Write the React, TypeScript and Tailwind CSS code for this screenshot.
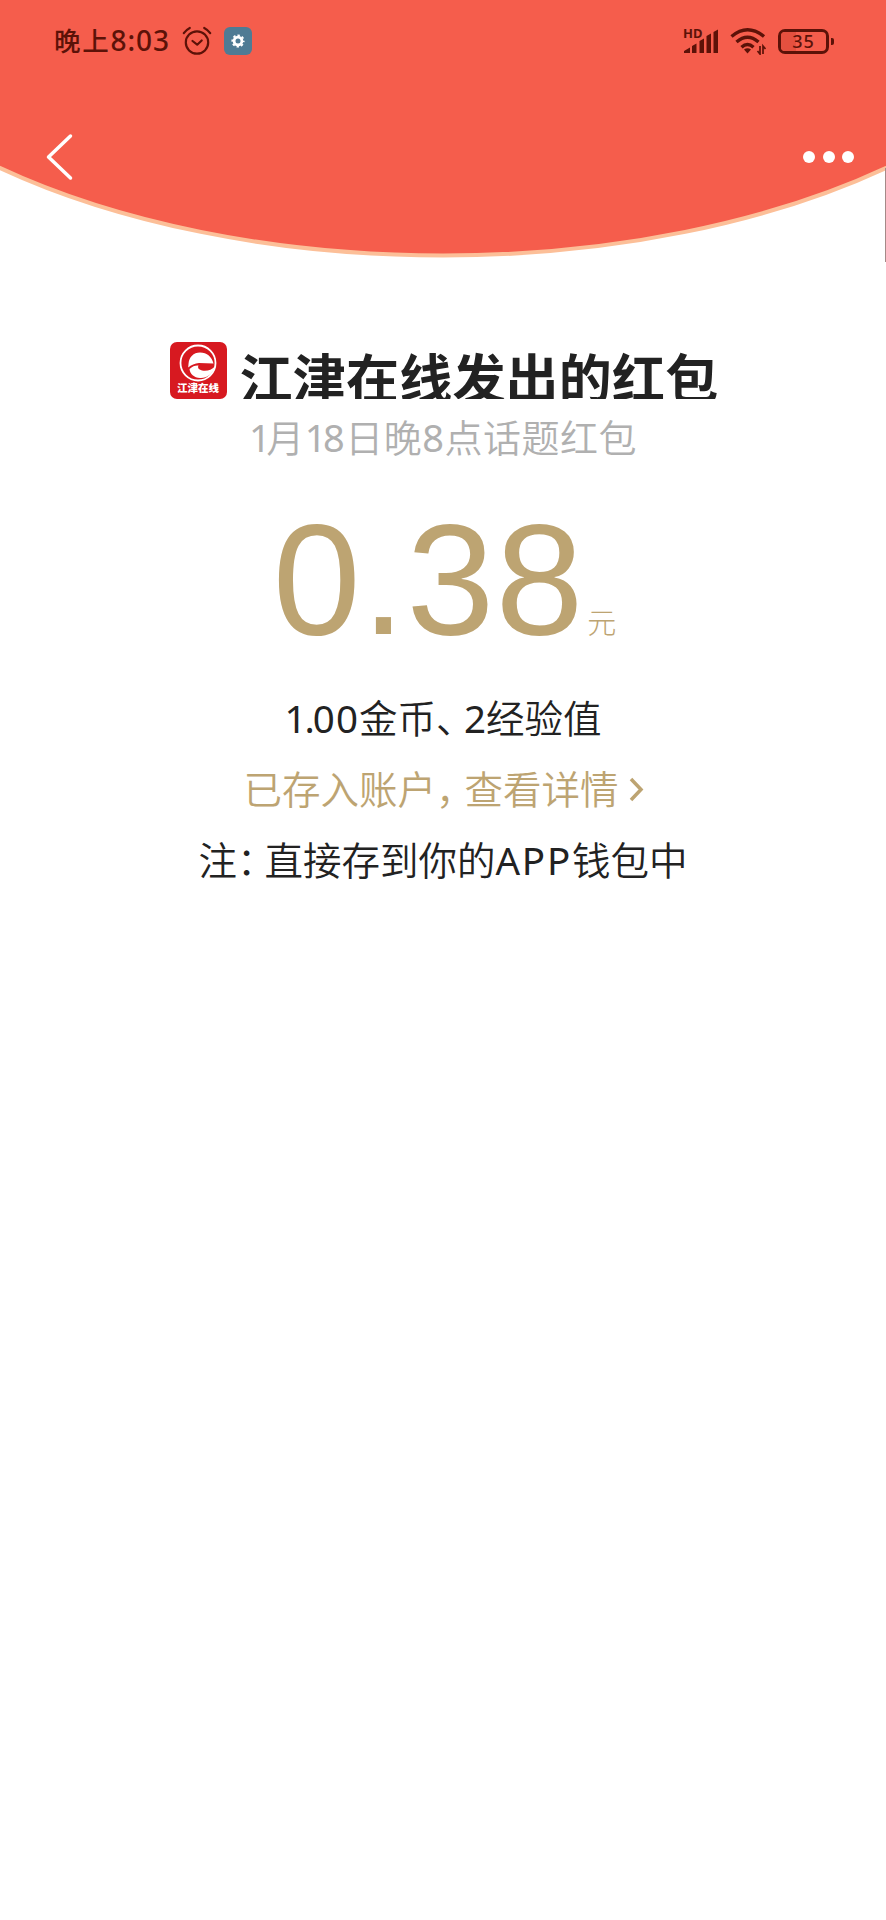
function AlarmIcon() {
  return (
    <svg className="w-[30px] h-[30px]" viewBox="0 0 30 30" fill="none" stroke="currentColor" strokeWidth={2.2} strokeLinecap="round" strokeLinejoin="round">
      <circle cx="15" cy="16.5" r="11.2" />
      <path d="M10.5 15l4.7 3.7 4.5-4.2M1.8 7.2Q4.2 3.8 7.8 2M28.2 7.2Q25.8 3.8 22.2 2" />
    </svg>
  );
}

function SettingsBadge() {
  return (
    <div className="w-[28px] h-[28px] rounded-[6px] bg-[#4f7b94] flex items-center justify-center">
      <svg className="w-[14px] h-[14px]" viewBox="0 0 14 14" fill="none" stroke="#fff">
        <circle cx="7" cy="7" r="3.9" strokeWidth={2.8} />
        <circle cx="7" cy="7" r="5.7" strokeWidth={1.8} strokeDasharray="2.4 2.076" strokeDashoffset="1.2" />
      </svg>
    </div>
  );
}

function SignalIcon() {
  return (
    <div className="relative w-[36px] h-[27px]">
      <span className="absolute left-0 -top-px text-[13px] leading-[12px] font-bold font-['Noto_Sans',sans-serif]">HD</span>
      <svg className="w-[36px] h-[27px]" viewBox="0 0 36 27" fill="currentColor">
        <path d="M1 25v-2l6-3.5V25zM9 25v-7l4.5-2.5V25zM16.5 25V13l4.5-2.5V25zM23.5 25V8l4.5-2.5V25zM30.5 25V4L35 1.5V25z" />
      </svg>
    </div>
  );
}

function WifiIcon() {
  return (
    <svg className="w-[36px] h-[28px]" viewBox="0 0 36 28" fill="none" stroke="currentColor" strokeWidth={3.4}>
      <path d="M1.5 9.5Q17.5-4 34 9.5M6.5 15Q17.5 5.5 28.5 15M11.5 20.2Q17.5 14.8 23.5 20.2" />
      <path d="M14 22.5Q17.5 20 21 22.5L17.5 26.5z" fill="currentColor" stroke="none" />
      <path d="M30 19v8l-2.500-3M33 27v-8l2.500 3" strokeWidth={1.7} />
    </svg>
  );
}

function BatteryIcon() {
  return (
    <div className="flex items-center">
      <div className="w-[51px] h-[25px] rounded-[7px] border-[3px] border-current flex items-center">
        <div className="w-full h-full rounded-[4px] bg-[linear-gradient(90deg,#e5503f_33%,transparent_33%)] flex items-center justify-center text-[18px] leading-none font-medium tracking-[1px] font-['Noto_Sans',sans-serif]">
          35
        </div>
      </div>
      <div className="w-[3px] h-[7px] ml-[2px] rounded-r-[2px] bg-current" />
    </div>
  );
}

function StatusBar() {
  return (
    <div className="relative h-[82px] pl-[54px] pr-[52px] flex items-center justify-between text-[#5c1208]">
      <div className="flex items-center">
        <span className="w-[117px] text-[26.5px] leading-[38px] h-[40px] font-medium tracking-[1.7px] whitespace-nowrap">
          晚上<span className="text-[28px] tracking-[1px]">8:03</span>
        </span>
        <div className="ml-[11px]"><AlarmIcon /></div>
        <div className="ml-[12px]"><SettingsBadge /></div>
      </div>
      <div className="flex items-center">
        <SignalIcon />
        <div className="ml-[11px]"><WifiIcon /></div>
        <div className="ml-[12px]"><BatteryIcon /></div>
      </div>
    </div>
  );
}

function NavBar() {
  return (
    <div className="relative h-[149px] pl-[45px] pr-[32px] flex items-center justify-between">
      <svg className="w-[28px] h-[48px]" viewBox="0 0 28 48" fill="none" stroke="#fff" strokeWidth={3.5} strokeLinecap="round" strokeLinejoin="round">
        <path d="M25.5 3L3.5 24l22 21" />
      </svg>
      <div className="flex gap-[7.5px]">
        <div className="w-[12px] h-[12px] rounded-full bg-white" />
        <div className="w-[12px] h-[12px] rounded-full bg-white" />
        <div className="w-[12px] h-[12px] rounded-full bg-white" />
      </div>
    </div>
  );
}

function SenderLogo() {
  return (
    <div className="w-[57px] h-[57px] rounded-[7px] bg-[#d71920] flex flex-col items-center overflow-hidden">
      <svg className="w-[38px] h-[38px] mt-[2px]" viewBox="0 0 38 38">
        <circle cx="19" cy="19" r="17.5" fill="none" stroke="#fff" strokeWidth={1.8} />
        <path d="M9.500 20C10 13 14.500 8.500 21 8.500c7 0 12 4.500 13.500 11L20 19c-4 .2-8 2-10.800 4.500z" fill="#fff" />
        <path d="M10.500 25c3-2.800 6-3.800 9-3.500-1.500 2.500 1 4.800 5 5.200 4.500.4 8.500-1.200 11.500-4.200C34 30 27.500 34.500 21 34 15 33.600 11 30 10.500 25z" fill="#fff" />
      </svg>
      <span className="mt-[-1px] text-[10.5px] leading-[14px] font-black text-white whitespace-nowrap">江津在线</span>
    </div>
  );
}

export default function App() {
  return (
    <div className="w-[886px] h-[1920px] overflow-hidden bg-white text-[#222] font-['Noto_Sans','Noto_Sans_CJK_SC',sans-serif]" lang="zh-CN">
      <header className="relative h-[262px]">
        <svg className="absolute inset-0 w-full h-full" viewBox="0 0 886 262">
          <ellipse cx="443" cy="-80.5" rx="658" ry="336" fill="#f55d4c" stroke="#fcbf98" strokeWidth={4} />
        </svg>
        <div className="absolute right-0 top-[168px] w-px h-[94px] bg-[#a58a88]" />
        <StatusBar />
        <NavBar />
      </header>

      <main className="flex flex-col items-center pt-[80px]">
        <div className="flex h-[57px] ml-[2px]">
          <SenderLogo />
          <h1 className="ml-[13px] h-[57px] overflow-hidden text-[53px] leading-[73px] tracking-[0.2px] font-bold whitespace-nowrap">江津在线发出的红包</h1>
        </div>

        <p className="h-[76px] text-[38px] leading-[76px] tracking-[0.5px] font-[350] text-[#b0b0b0] whitespace-nowrap">
          <span className="tracking-[-4.5px] font-normal">1</span>月<span className="tracking-[-3.5px] font-normal">1</span><span className="font-normal">8</span>日晚<span className="font-normal">8</span>点话题红包
        </p>

        <div className="h-[208px] ml-[3px] flex items-baseline text-[#bda472]">
          <span className="text-[158px] leading-[208px] tracking-[1px] whitespace-nowrap font-['Liberation_Sans',sans-serif]">
            0.38
          </span>
          <span className="ml-[3px] text-[29px] font-light">元</span>
        </div>

        <p className="h-[71px] text-[38.5px] leading-[71px] font-[350] whitespace-nowrap">
          <span className="tracking-[-2px] font-normal">1.</span><span className="tracking-[1px] font-normal">00</span>金币<span className="tracking-[-10.5px]">、</span><span className="font-normal">2</span>经验值
        </p>
        <p className="h-[71px] ml-[1px] flex items-center text-[38.5px] leading-[71px] font-[350] text-[#bda472] whitespace-nowrap">
          <span>已存入账户<span className="tracking-[-10px]">，</span>查看详情</span>
          <svg className="ml-[10px] w-[15px] h-[25px]" viewBox="0 0 15 25" fill="none" stroke="currentColor" strokeWidth={3.5}>
            <path d="M2 2l10 10.5L2 23" />
          </svg>
        </p>
        <p className="h-[71px] text-[38.5px] leading-[71px] font-[350] whitespace-nowrap">
          注<span className="tracking-[-11px]">：</span>直接存到你的<span className="font-normal tracking-[1.8px]">APP</span>钱包中
        </p>
      </main>
    </div>
  );
}
